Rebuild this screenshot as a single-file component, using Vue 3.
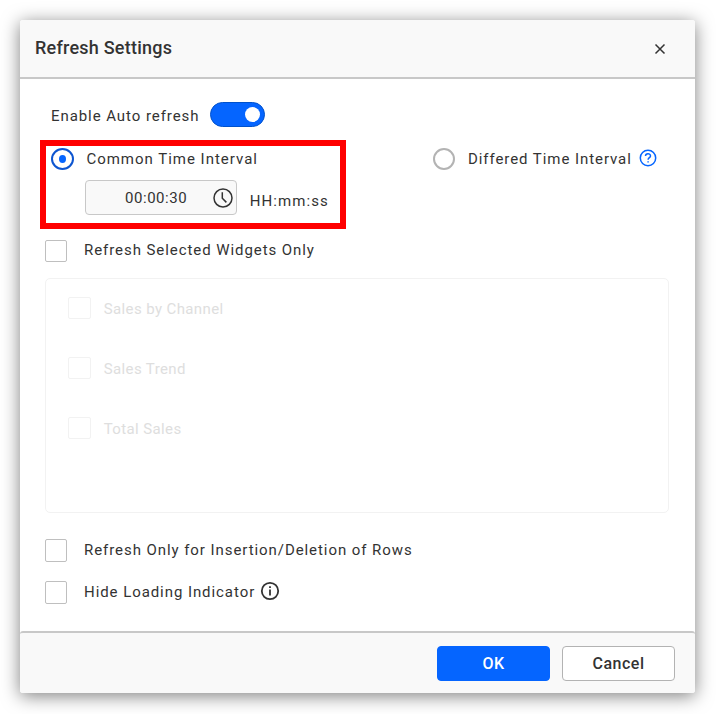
<script setup>
import { ref } from 'vue'

const interval = ref('00:00:30')
const widgets = ['Sales by Channel', 'Sales Trend', 'Total Sales']
</script>

<template>
  <div class="page">
    <section class="dialog">
      <header class="header">
        <h1 class="title">Refresh Settings</h1>
        <svg class="close" viewBox="0 0 12 12"><path d="M1.5 1.5 10.5 10.5M10.5 1.5 1.5 10.5" /></svg>
      </header>

      <main class="body">
        <div class="auto">
          <span class="label auto-label">Enable Auto refresh</span>
          <span class="toggle"><span class="knob"></span></span>
        </div>

        <div class="modes">
          <div class="mode">
            <span class="radio on"></span>
            <span class="label common">Common Time Interval</span>
          </div>
          <div class="mode">
            <span class="radio"></span>
            <span class="label differed">Differed Time Interval</span>
            <svg class="help" viewBox="0 0 18 18">
              <circle cx="9" cy="9" r="7.7" />
              <path d="M6.5 7.1C6.5 3.9 11.5 4 11.5 6.9C11.5 8.6 9.1 8.8 9.1 10.7" />
              <path d="M9.1 12.2V13.5" />
            </svg>
          </div>
        </div>

        <div class="time">
          <div class="field">
            <span class="value">{{ interval }}</span>
            <svg class="clock" viewBox="0 0 20 20">
              <circle cx="10" cy="10" r="9" />
              <path d="M9.3 4.2V10.3L13.4 14.4" />
            </svg>
          </div>
          <span class="label format">HH:mm:ss</span>
        </div>

        <div class="check selected">
          <span class="box"></span>
          <span class="label">Refresh Selected Widgets Only</span>
        </div>

        <div class="panel">
          <div v-for="name in widgets" :key="name" class="widget">
            <span class="box"></span>
            <span class="label">{{ name }}</span>
          </div>
        </div>

        <div class="check rows">
          <span class="box"></span>
          <span class="label">Refresh Only for Insertion/Deletion of Rows</span>
        </div>
        <div class="check hide">
          <span class="box"></span>
          <span class="label">Hide Loading Indicator</span>
          <svg class="info" viewBox="0 0 20 20">
            <circle cx="10" cy="10" r="8.2" />
            <path d="M10 8.4V14.6M10 5.2V7" />
          </svg>
        </div>
      </main>

      <footer class="footer">
        <button class="btn primary">OK</button>
        <button class="btn">Cancel</button>
      </footer>
    </section>
    <div class="highlight"></div>
  </div>
</template>

<style>
body {
  background: #fff;
}
</style>

<style scoped>
* {
  box-sizing: border-box;
}
.page {
  position: relative;
  width: 716px;
  height: 714px;
  padding: 20px 21px 21px 20px;
  overflow: hidden;
  font-family: Roboto, sans-serif;
  font-size: 15px;
  color: #333;
}
.dialog {
  display: flex;
  flex-direction: column;
  height: 673px;
  border-radius: 3px;
  background: #fff;
  box-shadow: 0 3px 18px rgba(0, 0, 0, 0.5);
}
.header {
  display: flex;
  align-items: center;
  justify-content: space-between;
  height: 59px;
  padding: 0 29px 0 15px;
  border-bottom: 2px solid #c8c8c8;
  border-radius: 3px 3px 0 0;
  background: #f9f9f9;
}
.title {
  margin: 0;
  padding-bottom: 1px;
  font-size: 18px;
  font-weight: 500;
  line-height: 24px;
  letter-spacing: 0.23px;
}
.close {
  width: 12px;
  height: 12px;
  margin-top: 1px;
  fill: none;
  stroke: #333;
  stroke-width: 1.5;
}
.body {
  flex: 1;
  padding: 23px 26px 0 25px;
}
.label {
  font-weight: 400;
  line-height: 20px;
  letter-spacing: 0.93px;
  white-space: nowrap;
}
.auto {
  display: flex;
  height: 25px;
  padding-left: 6px;
}
.auto-label {
  width: 159px;
  padding-top: 4px;
}
.toggle {
  display: flex;
  align-items: center;
  justify-content: flex-end;
  width: 55px;
  height: 25px;
  padding-right: 4px;
  border: 1px solid #0052cc;
  border-radius: 13px;
  background: #0565ff;
}
.knob {
  width: 15px;
  height: 15px;
  border-radius: 50%;
  background: #fff;
}
.modes {
  display: grid;
  grid-template-columns: 382px 1fr;
  height: 22px;
  margin-top: 21px;
  padding-left: 6px;
}
.mode {
  display: flex;
  align-items: center;
}
.radio {
  display: grid;
  place-items: center;
  width: 22px;
  height: 22px;
  border: 2px solid #b3b3b3;
  border-radius: 50%;
}
.radio.on {
  width: 23px;
  border-color: #0d55d0;
}
.radio.on::after {
  content: '';
  width: 7px;
  height: 8px;
  border-radius: 50%;
  background: #0565ff;
}
.common {
  margin-left: 12.4px;
  letter-spacing: 0.99px;
}
.differed {
  margin-left: 13px;
}
.help {
  width: 18px;
  height: 18px;
  margin: -2px 0 0 7px;
  fill: none;
  stroke: #0565ff;
  stroke-width: 1.5;
}
.time {
  display: flex;
  height: 35px;
  margin-top: 10px;
  padding-left: 40px;
}
.field {
  display: flex;
  align-items: center;
  justify-content: space-between;
  width: 152px;
  padding: 0 3px 0 39px;
  border: 1px solid #c8c8c8;
  border-radius: 4px;
  background: #f9f9f9;
}
.value {
  letter-spacing: 0.55px;
}
.clock {
  width: 20px;
  height: 20px;
  fill: none;
  stroke: #333;
  stroke-width: 1.5;
}
.format {
  margin: 11px 0 0 12.7px;
  letter-spacing: 1.08px;
}
.check {
  display: flex;
  align-items: center;
  height: 23px;
}
.box {
  flex: none;
  width: 22px;
  height: 22px;
  border: 1px solid #bfbfbf;
  border-radius: 2px;
  background: #fff;
}
.check .label {
  margin: -2px 0 0 17px;
}
.selected {
  margin-top: 24px;
}
.panel {
  height: 235px;
  margin-top: 16px;
  padding: 18px 22px;
  border: 1px solid #f2f2f2;
  border-radius: 5px;
}
.widget {
  display: flex;
  height: 60px;
  color: #dedede;
}
.widget .box {
  width: 23px;
  border-color: #f2f2f2;
}
.widget .label {
  margin: 2px 0 0 12.7px;
  letter-spacing: 0.39px;
}
.rows {
  margin-top: 26px;
}
.rows .box,
.hide .box {
  height: 23px;
}
.hide {
  margin-top: 19px;
}
.info {
  width: 20px;
  height: 20px;
  margin: -3px 0 0 5px;
  fill: none;
  stroke: #333;
  stroke-width: 1.8;
}
.footer {
  display: flex;
  justify-content: flex-end;
  gap: 12px;
  height: 62px;
  padding: 13px 20px 0 0;
  border-top: 2px solid #c8c8c8;
  border-radius: 3px;
  background: #f9f9f9;
}
.btn {
  width: 113px;
  height: 35px;
  padding: 0;
  border: 1px solid #b3b3b3;
  border-radius: 4px;
  background: #fff;
  color: #333;
  font: 500 16px Roboto, sans-serif;
  letter-spacing: 0.5px;
}
.primary {
  border-color: #0565ff;
  background: #0565ff;
  color: #fff;
}
.highlight {
  position: absolute;
  top: 140px;
  left: 40px;
  width: 306px;
  height: 89px;
  border: 6px solid #f00;
}
</style>
